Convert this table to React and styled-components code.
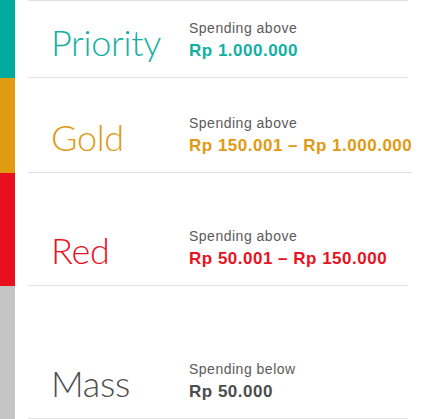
import styled, { createGlobalStyle } from 'styled-components';

const GlobalStyle = createGlobalStyle`
  html, body {
    margin: 0;
    padding: 0;
    background: #fff;
  }
`;

const tiers = [
  { name: 'Priority', note: 'Spending above', amount: 'Rp 1.000.000', color: '#12b0a2', stripe: '#00ab9e', height: 76 },
  { name: 'Gold', note: 'Spending above', amount: 'Rp 150.001 – Rp 1.000.000', color: '#e09a14', stripe: '#e09b12', height: 94 },
  { name: 'Red', note: 'Spending above', amount: 'Rp 50.001 – Rp 150.000', color: '#e8131f', stripe: '#e8101e', height: 112 },
  { name: 'Mass', note: 'Spending below', amount: 'Rp 50.000', color: '#4d4d4d', stripe: '#c5c5c5', height: 132 },
];

const List = styled.div`
  display: flex;
  flex-direction: column;
  width: 408px;
`;

const Row = styled.div`
  display: flex;
  align-items: stretch;
`;

const Stripe = styled.div`
  flex: 0 0 15px;
  background: ${(p) => p.$color};
`;

const Body = styled.div`
  flex: 1;
  margin-left: 13px;
  min-height: ${(p) => p.$height}px;
  box-sizing: border-box;
  display: flex;
  align-items: last baseline;
  padding: 0 0 13px 23px;
  border-bottom: 1px solid #e2e2e2;
  border-top: ${(p) => (p.$first ? '1px solid #e2e2e2' : 'none')};
`;

const Name = styled.div`
  flex: 0 0 138px;
  font-family: Lato, Roboto, 'Liberation Sans', sans-serif;
  font-weight: 300;
  font-size: 36px;
  line-height: 36px;
  letter-spacing: -0.3px;
  color: ${(p) => p.$color};
`;

const Details = styled.div`
  display: flex;
  flex-direction: column;
  font-family: 'Liberation Sans', Arial, sans-serif;
  white-space: nowrap;
`;

const Note = styled.div`
  font-size: 14px;
  line-height: 20px;
  letter-spacing: 0.5px;
  color: #5a5a5a;
`;

const Amount = styled.div`
  font-size: 17px;
  line-height: 26px;
  font-weight: 700;
  letter-spacing: 0.5px;
  color: ${(p) => p.$color};
`;

export default function App() {
  return (
    <>
      <GlobalStyle />
      <List>
        {tiers.map((t, i) => (
          <Row key={t.name}>
            <Stripe $color={t.stripe} />
            <Body $height={t.height + (i === 0 ? 2 : 1)} $first={i === 0}>
              <Name $color={t.color}>{t.name}</Name>
              <Details>
                <Note>{t.note}</Note>
                <Amount $color={t.color}>{t.amount}</Amount>
              </Details>
            </Body>
          </Row>
        ))}
      </List>
    </>
  );
}
